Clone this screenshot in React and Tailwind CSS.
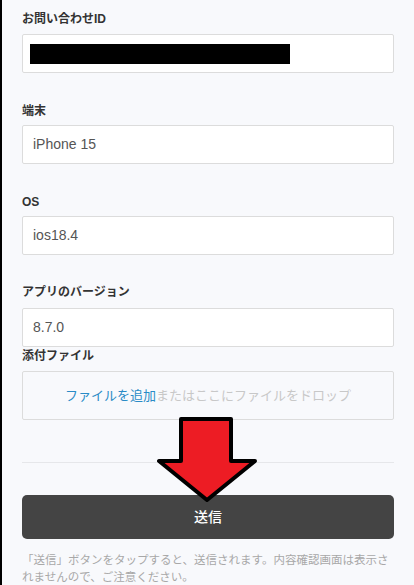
export default function App() {
  const font = { fontFamily: '"Liberation Sans", "Noto Sans CJK JP", sans-serif' };
  return (
    <div className="relative w-[414px] h-[585px] overflow-hidden bg-[#f8f9fc] border-l-2 border-black" style={font}>
      <div className="pl-[20px] pr-[20px] pt-[11px]">
        {/* ID */}
        <div className="text-[12px] leading-[16px] font-bold text-[#333] mb-[7px]">お問い合わせID</div>
        <div className="h-[39px] bg-white border border-[#dcdcdc] rounded-[2px] flex items-center pl-[7px]">
          <div className="w-[260px] h-[20px] bg-black"></div>
        </div>

        {/* device */}
        <div className="mt-[30px] text-[12px] leading-[16px] font-bold text-[#333] mb-[6px]">端末</div>
        <div className="h-[39px] bg-white border border-[#dcdcdc] rounded-[2px] flex items-center pl-[10px] text-[14px] text-[#555]">
          iPhone 15
        </div>

        {/* os */}
        <div className="mt-[30px] text-[12px] leading-[16px] font-bold text-[#333] mb-[6px]">OS</div>
        <div className="h-[39px] bg-white border border-[#dcdcdc] rounded-[2px] flex items-center pl-[10px] text-[14px] text-[#555]">
          ios18.4
        </div>

        {/* app version */}
        <div className="mt-[29px] text-[12px] leading-[16px] font-bold text-[#333] mb-[8px]">アプリのバージョン</div>
        <div className="h-[39px] bg-white border border-[#dcdcdc] rounded-[2px] flex items-center pl-[10px] text-[14px] text-[#555]">
          8.7.0
        </div>

        {/* attachment */}
        <div className="mt-[1px] text-[12px] leading-[16px] font-bold text-[#333] mb-[7px]">添付ファイル</div>
        <div className="h-[49px] bg-[#f8f9fc] border border-[#dcdcdc] rounded-[2px] flex items-center justify-center text-[13px]">
          <span className="text-[#2a8bc6]">ファイルを追加</span>
          <span className="text-[#c8c8c8]">またはここにファイルをドロップ</span>
        </div>

        <div className="mt-[42px] h-px bg-[#e6e7ea]"></div>

        <button className="mt-[32px] w-full h-[44px] rounded-[5px] bg-[#444] text-white text-[14px] font-medium">
          送信
        </button>

        <p className="mt-[13px] text-[11.5px] leading-[17px] text-[#a8a8a8]">
          「送信」ボタンをタップすると、送信されます。内容確認画面は表示されませんので、ご注意ください。
        </p>
      </div>

      {/* red arrow overlay */}
      <svg className="absolute left-0 top-0 pointer-events-none" width="414" height="585" viewBox="0 0 414 585">
        <polygon
          points="181,419 231,419 231,461 255,461 207,500 159,461 181,461"
          fill="#ed1c24"
          stroke="#000"
          strokeWidth="4"
          strokeLinejoin="round"
          transform="translate(-2 0)"
        />
      </svg>
    </div>
  );
}
